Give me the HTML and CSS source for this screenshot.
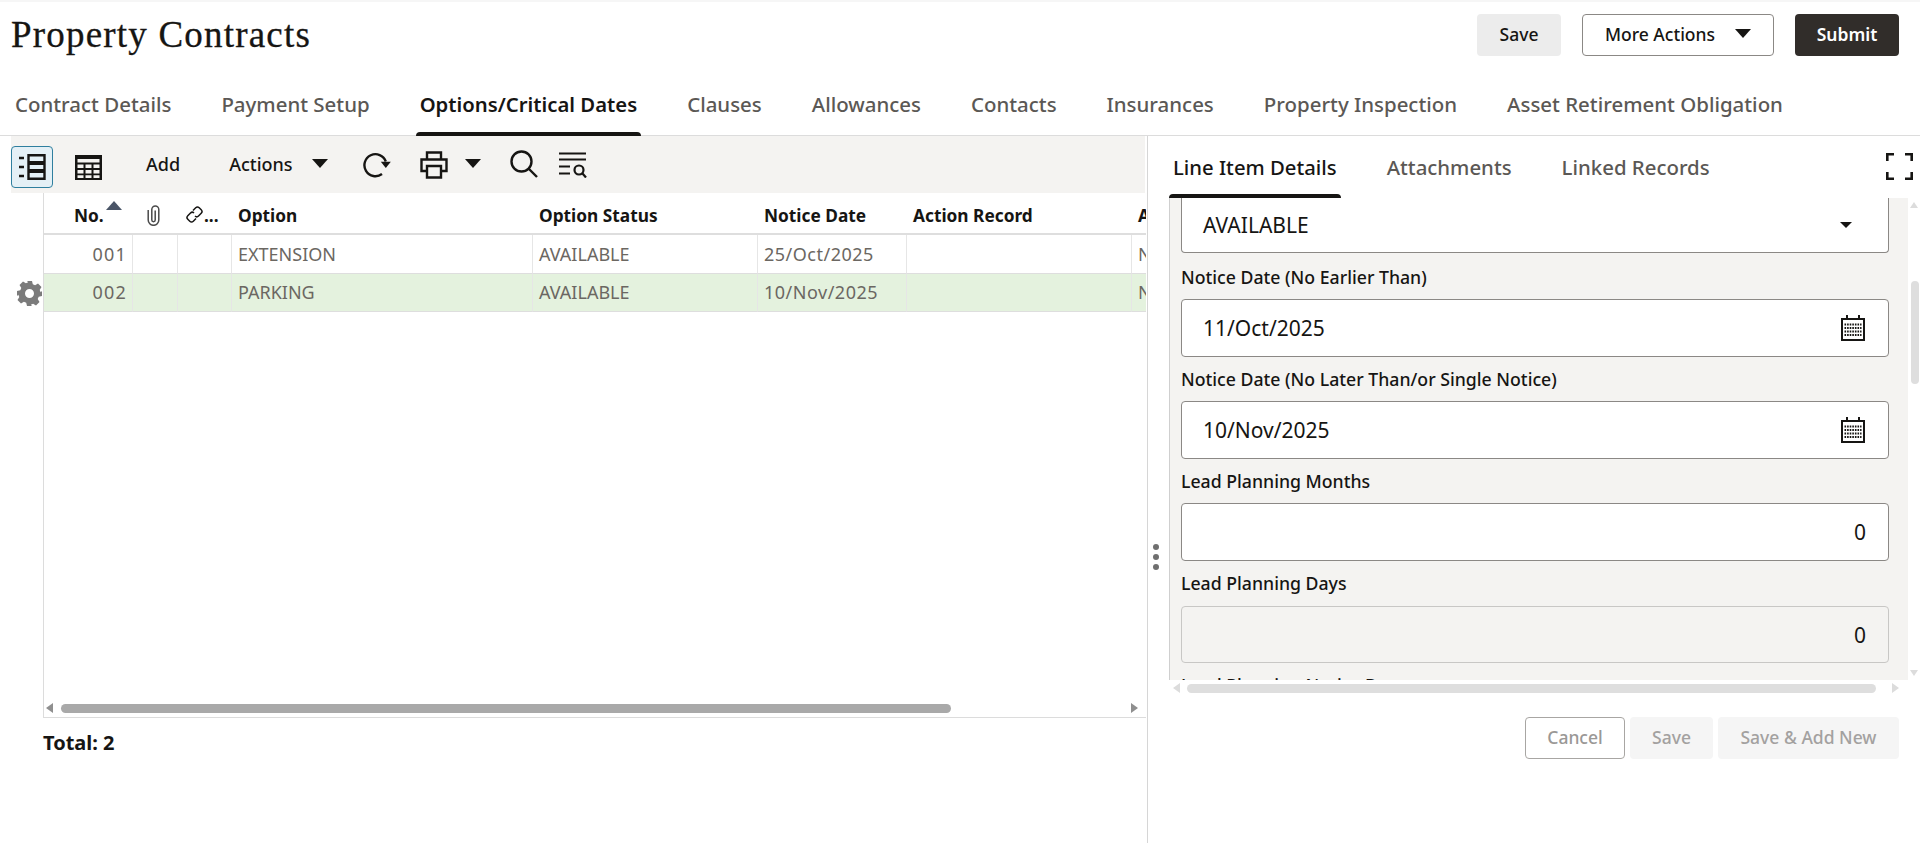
FILE: index.html
```html
<!DOCTYPE html>
<html lang="en">
<head>
<meta charset="utf-8">
<title>Property Contracts</title>
<link rel="stylesheet" href="styles.css">
</head>
<body>
<div class="app">
  <header class="page-head">
    <h1 class="page-title">Property Contracts</h1>
    <div class="head-actions">
      <button class="btn btn-soft btn-save">Save</button>
      <button class="btn btn-outline btn-more">More Actions <span class="caret caret-lg"></span></button>
      <button class="btn btn-dark btn-submit">Submit</button>
    </div>
  </header>
  <nav class="main-tabs">
    <a class="tab">Contract Details</a>
    <a class="tab">Payment Setup</a>
    <a class="tab tab-active">Options/Critical Dates</a>
    <a class="tab">Clauses</a>
    <a class="tab">Allowances</a>
    <a class="tab">Contacts</a>
    <a class="tab">Insurances</a>
    <a class="tab">Property Inspection</a>
    <a class="tab">Asset Retirement Obligation</a>
  </nav>
  <main class="split">
    <section class="left-pane">
      <div class="toolbar">
        <button class="tool tool-active" aria-label="List view">
          <svg width="28" height="28" viewBox="0 0 28 28" fill="none" stroke="#161513"><path d="M1 5h5M1 14h5M1 23h5" stroke-width="2.4"/><path d="M10.5 2.2h16v7h-16zM10.5 10.8h16v6.5h-16zM10.5 18.8h16v7h-16z" stroke-width="2.4"/></svg>
        </button>
        <button class="tool tool-table" aria-label="Table view">
          <svg width="27" height="25" viewBox="0 0 27 25"><path fill="#161513" d="M0 0h27v25H0z"/><path fill="#f4f3f1" d="M2.5 4h22v3.5h-22zM2.5 9.5h6v3.5h-6zM10.5 9.5h6v3.5h-6zM18.5 9.5h6v3.5h-6zM2.5 15h6v3.5h-6zM10.5 15h6v3.5h-6zM18.5 15h6v3.5h-6zM2.5 20.200h6v2.800h-6zM10.500 20.200h6v2.800h-6zM18.500 20.200h6v2.800h-6z"/></svg>
        </button>
        <span class="tool-text tool-add">Add</span>
        <span class="tool-text tool-actions">Actions</span>
        <span class="caret caret-lg caret-actions"></span>
        <svg class="ico-refresh" width="28" height="26" viewBox="0 0 28 26" fill="none" stroke="#161513" stroke-width="2.400"><path d="M19 22A11 11 0 1 1 22.800 9.500"/><path fill="#161513" stroke="none" d="M17.800 9.800h10L22.800 16z"/></svg>
        <svg class="ico-print" width="28" height="28" viewBox="0 0 28 28" fill="none" stroke="#161513" stroke-width="2.400"><path d="M7 8V1.500h14V8"/><path d="M7 20H1.500V8.500h25V20H21"/><path d="M7 15h14v11.500H7z"/></svg>
        <span class="caret caret-lg caret-print"></span>
        <svg class="ico-search" width="28" height="28" viewBox="0 0 28 28" fill="none" stroke="#161513" stroke-width="2.400"><circle cx="11.500" cy="11.500" r="10"/><path d="M18.500 18.500L27 27"/></svg>
        <svg class="ico-filter" width="28" height="26" viewBox="0 0 28 26" fill="none" stroke="#161513" stroke-width="2.200"><path d="M0 1.500h27M0 7.500h27M0 14.500h11M0 21.500h11"/><circle cx="20" cy="18" r="4.500"/><path d="M23.500 21.500L27 25.500"/></svg>
      </div>
      <div class="grid-area">
        <div class="gutter">
          <svg class="ico-gear" width="25" height="25" viewBox="0 0 25 25"><path fill="#7b7b7b" fill-rule="evenodd" d="M10 0h5l.8 3.300 2.300 1 2.900-1.800 3.500 3.500-1.800 2.900 1 2.300L25 10v5l-3.300.8-1 2.300 1.800 2.900-3.500 3.500-2.900-1.800-2.300 1L15 25h-5l-.8-3.300-2.300-1L4 22.500.5 19l1.800-2.900-1-2.300L0 15v-5l3.300-.8 1-2.300L2.500 4 6 .5l2.900 1.800 2.300-1zM12.500 8a4.500 4.500 0 1 0 0 9 4.500 4.500 0 0 0 0-9z"/></svg>
        </div>
        <div class="grid-box">
          <div class="table-clip">
            <table class="grid">
              <colgroup>
                <col class="c-no"><col class="c-att"><col class="c-link"><col class="c-opt"><col class="c-stat"><col class="c-date"><col class="c-act"><col class="c-last">
              </colgroup>
              <thead>
                <tr>
                  <th class="th-no">No.<span class="sort-up"></span></th>
                  <th class="th-icon">
                    <svg width="13" height="21" viewBox="0 0 13 21" fill="none" stroke="#4a4a4a" stroke-width="1.500"><path d="M1.200 5v10a5.300 5.300 0 0 0 10.600 0V4.500a3.500 3.500 0 0 0-7 0V15a1.700 1.700 0 0 0 3.400 0V5.500"/></svg>
                  </th>
                  <th class="th-link">
                    <svg width="17" height="17" viewBox="0 0 17 17" fill="none" stroke="#161513" stroke-width="1.500"><path d="M7 4.500L9.700 1.800a2.500 2.500 0 0 1 3.500 0l2 2a2.500 2.500 0 0 1 0 3.500l-2.700 2.700a2.500 2.500 0 0 1-3.500 0"/><path d="M10 12.500L7.300 15.200a2.500 2.500 0 0 1-3.500 0l-2-2a2.500 2.500 0 0 1 0-3.500L4.500 7a2.500 2.500 0 0 1 3.500 0"/></svg><span class="th-ell">...</span>
                  </th>
                  <th>Option</th>
                  <th>Option Status</th>
                  <th>Notice Date</th>
                  <th>Action Record</th>
                  <th>Action</th>
                </tr>
              </thead>
              <tbody>
                <tr>
                  <td class="num">001</td><td></td><td></td><td>EXTENSION</td><td>AVAILABLE</td><td class="date">25/Oct/2025</td><td></td><td>No</td>
                </tr>
                <tr class="row-sel">
                  <td class="num">002</td><td></td><td></td><td>PARKING</td><td>AVAILABLE</td><td class="date">10/Nov/2025</td><td></td><td>No</td>
                </tr>
              </tbody>
            </table>
          </div>
          <div class="hscroll hscroll-dark">
            <span class="arrow-left"></span>
            <span class="hthumb"></span>
            <span class="arrow-right"></span>
          </div>
        </div>
      </div>
      <div class="total">Total: 2</div>
    </section>
    <div class="splitter"><span class="dot"></span><span class="dot"></span><span class="dot"></span></div>
    <section class="right-pane">
      <div class="side-tabs">
        <a class="stab stab-active">Line Item Details</a>
        <a class="stab">Attachments</a>
        <a class="stab">Linked Records</a>
        <svg class="ico-expand" width="27" height="27" viewBox="0 0 27 27" fill="none" stroke="#161513" stroke-width="2.600"><path d="M1.300 8V1.300H8M19 1.300h6.700V8M25.700 19v6.700H19M8 25.700H1.300V19"/></svg>
      </div>
      <div class="form-wrap">
        <div class="form-row">
          <div class="form-panel">
            <div class="field field-top"><span>AVAILABLE</span><span class="caret caret-sm"></span></div>
            <label class="flabel flabel-first">Notice Date (No Earlier Than)</label>
            <div class="field"><span>11/Oct/2025</span>
              <svg width="24" height="26" viewBox="0 0 24 26"><path fill="none" stroke="#161513" stroke-width="2" d="M1 4h22v21H1z"/><path fill="none" stroke="#161513" stroke-width="2" d="M6 0v4M18 0v4"/><path fill="none" stroke="#161513" stroke-width="2" stroke-dasharray="1.600 1" d="M3.500 9.500h17M3.500 13h17M3.500 16.500h17M3.500 20h17"/></svg>
            </div>
            <label class="flabel">Notice Date (No Later Than/or Single Notice)</label>
            <div class="field"><span>10/Nov/2025</span>
              <svg width="24" height="26" viewBox="0 0 24 26"><path fill="none" stroke="#161513" stroke-width="2" d="M1 4h22v21H1z"/><path fill="none" stroke="#161513" stroke-width="2" d="M6 0v4M18 0v4"/><path fill="none" stroke="#161513" stroke-width="2" stroke-dasharray="1.600 1" d="M3.500 9.500h17M3.500 13h17M3.500 16.500h17M3.500 20h17"/></svg>
            </div>
            <label class="flabel">Lead Planning Months</label>
            <div class="field field-num"><span>0</span></div>
            <label class="flabel">Lead Planning Days</label>
            <div class="field field-num field-off"><span>0</span></div>
            <label class="flabel flabel-last">Lead Planning Notice Date</label>
          </div>
          <div class="vscroll">
            <span class="arrow-up"></span>
            <span class="vthumb"></span>
            <span class="arrow-down"></span>
          </div>
        </div>
        <div class="hscroll hscroll-light">
          <span class="arrow-left"></span>
          <span class="hthumb"></span>
          <span class="arrow-right"></span>
        </div>
      </div>
      <div class="form-actions">
        <button class="btn btn-cancel">Cancel</button>
        <button class="btn btn-off btn-s2">Save</button>
        <button class="btn btn-off btn-s3">Save &amp; Add New</button>
      </div>
    </section>
  </main>
</div>
</body>
</html>
```

FILE: styles.css
```css
* { box-sizing: border-box; }
html, body { margin: 0; height: 100%; background: #fff; overflow: hidden; }
body { font-family: "Noto Sans", "Open Sans", sans-serif; color: #161513; }
.app { width: 1920px; height: 843px; display: flex; flex-direction: column; border-top: 2px solid #f6f6f6; }

.page-head { height: 62px; flex: none; display: flex; justify-content: space-between; align-items: flex-start; padding: 12px 21px 0 11px; }
.page-title { margin: 0; font-family: "Liberation Serif", serif; font-weight: 400; font-size: 37px; line-height: 42px; letter-spacing: 1.200px; -webkit-text-stroke: .3px #161513; }
.head-actions { display: flex; gap: 21px; }

.btn { font: 500 17.500px/1 "Noto Sans", sans-serif; height: 42px; border-radius: 4px; border: 1px solid transparent; padding: 0; color: #161513; display: inline-flex; align-items: center; justify-content: center; }
.btn-soft { background: #ececec; }
.btn-save { width: 84px; }
.btn-outline { background: #fff; border-color: #8b8885; }
.btn-more { width: 192px; gap: 20px; }
.btn-dark { background: #312d2a; color: #fff; font-weight: 600; }
.btn-submit { width: 104px; }
.caret { display: inline-block; width: 0; height: 0; border-style: solid; border-color: #161513 transparent transparent; }
.caret-lg { border-width: 9px 8px 0; }
.btn-more .caret { margin-top: -4px; }

.main-tabs { height: 72px; flex: none; display: flex; gap: 50px; padding: 0 0 0 15px; border-bottom: 1px solid #dcdcdc; }
.tab { font-size: 20.450px; font-weight: 500; color: #5b5855; line-height: 24px; padding-top: 28px; position: relative; white-space: nowrap; }
.tab-active { color: #161513; font-weight: 600; font-size: 20.300px; }
.tab-active::after { content: ""; position: absolute; left: -4px; right: -4px; bottom: -1px; height: 4px; background: #161513; border-radius: 4px 4px 0 0; }

.split { flex: 1; display: flex; min-height: 0; }
.left-pane { width: 1148px; flex: none; border-right: 1px solid #d6d6d6; display: flex; flex-direction: column; }
.toolbar { margin-left: 11px; margin-right: 2px; height: 57px; flex: none; background: #f4f3f1; display: flex; align-items: center; }
.tool { border: 0; background: none; padding: 0; display: flex; align-items: center; justify-content: center; }
.tool-active { width: 42px; height: 42px; margin: 5px 22px 0 0; border: 1px solid #2f7f9f; border-radius: 4px; background: #e4f0f6; }
.tool-table { width: 27px; height: 25px; margin-top: 5px; }
.tool-text { font-size: 18px; font-weight: 500; margin-bottom: 2px; }
.tool-add { margin-left: 44px; }
.tool-actions { margin-left: 49px; }
.caret-actions { margin-left: 19px; margin-bottom: 2px; }
.ico-refresh { margin-left: 35px; }
.ico-print { margin-left: 29px; }
.caret-print { margin-left: 17px; margin-bottom: 2px; }
.ico-search { margin-left: 29px; margin-bottom: 2px; }
.ico-filter { margin-left: 21px; }

.grid-area { display: flex; height: 525px; flex: none; }
.gutter { width: 43px; flex: none; padding: 88px 0 0 17px; }
.ico-gear { display: block; }
.grid-box { width: 1103px; flex: none; border-left: 1px solid #dcdcdc; border-bottom: 1px solid #dcdcdc; display: flex; flex-direction: column; }
.table-clip { flex: 1; overflow: hidden; }
.grid { table-layout: fixed; width: 1190px; border-collapse: separate; border-spacing: 0; font-size: 18px; }
.c-no { width: 89px; } .c-att { width: 45px; } .c-link { width: 54px; } .c-opt { width: 301px; } .c-stat { width: 225px; } .c-date { width: 149px; } .c-act { width: 225px; } .c-last { width: 102px; }
.grid th { height: 42px; text-align: left; font-size: 17.300px; font-weight: 700; padding: 5px 6px 0; border-bottom: 2px solid #dedede; white-space: nowrap; overflow: hidden; color: #161513; }
.grid td { height: 38px; padding: 0 6px 1px; color: #6b6762; border-right: 1px solid #e6e6e6; border-bottom: 1px solid #dedede; white-space: nowrap; overflow: hidden; }
.grid tbody tr:first-child td { height: 39px; }
.th-no { padding-left: 30px !important; overflow: visible !important; position: relative; }
.sort-up { display: inline-block; width: 0; height: 0; border: solid transparent; border-width: 0 8px 9px; border-bottom-color: #4a5567; position: absolute; left: 62px; top: 8px; }
.th-icon { padding-left: 14px !important; }
.th-icon svg { display: block; }
.th-link { padding-left: 8px !important; }
.th-link svg { vertical-align: -1px; }
.th-ell { margin-left: 1px; }
.num { text-align: right; padding-right: 5px !important; letter-spacing: 1.200px; }
.date { letter-spacing: .5px; }
.row-sel td { background: #e4f2de; }

.hscroll { height: 22px; flex: none; display: flex; align-items: center; }
.hscroll-dark { padding: 4px 2px 0; }
.hthumb { display: block; height: 9px; border-radius: 5px; }
.hscroll-dark .hthumb { width: 890px; margin-left: 8px; background: #a9a9a9; }
.hscroll-dark .arrow-right { margin-left: 180px; }
.arrow-left, .arrow-right, .arrow-up, .arrow-down { display: block; width: 0; height: 0; border: solid transparent; }
.arrow-left { border-width: 5px 7px 5px 0; border-right-color: #8f8f8f; }
.arrow-right { border-width: 5px 0 5px 7px; border-left-color: #8f8f8f; }
.hscroll-light .arrow-left { border-right-color: #dcdcdc; }
.hscroll-light .arrow-right { border-left-color: #dcdcdc; }
.total { margin: 13px 0 0 43px; font-size: 20px; font-weight: 700; line-height: 24px; }

.splitter { width: 21px; flex: none; display: flex; flex-direction: column; align-items: center; gap: 4px; padding: 408px 5px 0 0; }
.dot { width: 6px; height: 6px; border-radius: 50%; background: #6f6f6f; }

.right-pane { flex: 1; min-width: 0; display: flex; flex-direction: column; }
.side-tabs { height: 63px; flex: none; display: flex; gap: 50px; padding-left: 4px; border-top: 1px solid #dcdcdc; position: relative; margin-top: -1px; }
.stab { font-size: 20.400px; font-weight: 500; color: #5b5855; line-height: 24px; padding-top: 19px; position: relative; white-space: nowrap; }
.stab-active { color: #161513; font-size: 20.300px; }
.stab-active::after { content: ""; position: absolute; left: -4px; right: -4px; bottom: 0; height: 4px; background: #161513; border-radius: 4px 4px 0 0; }
.ico-expand { position: absolute; right: 7px; top: 17px; }

.form-wrap { flex: none; }
.form-row { display: flex; height: 482px; }
.form-panel { width: 739px; flex: none; overflow: hidden; background: #f4f3f1; border-left: 1px solid #cfcfcf; padding: 0 19px 0 11px; }
.field { height: 58px; background: #fff; border: 1px solid #8b8885; border-radius: 4px; display: flex; justify-content: space-between; align-items: center; padding: 0 21px; font-size: 21px; }
.field-top { height: 55px; border-top: 0; border-radius: 0 0 4px 4px; }
.field svg { margin-right: 2px; }
.caret-sm { border-width: 6px 6px 0; margin-right: 15px; }
.field-num { justify-content: flex-end; padding-right: 22px; }
.field-off { background: #f4f3f1; border-color: #c8c7c5; height: 57px; margin-top: 1px; }
.flabel { display: block; height: 44px; padding-top: 10px; font-size: 17.700px; font-weight: 500; line-height: 24px; }
.flabel-first { margin-top: 2px; }
.flabel-last { margin-top: 1px; padding-top: 9px; }
.vscroll { width: 12px; flex: none; display: flex; flex-direction: column; align-items: center; padding: 4px 0; }
.arrow-up { border-width: 0 4px 6px; border-bottom-color: #dcdcdc; }
.arrow-down { border-width: 6px 4px 0; border-top-color: #dcdcdc; margin-top: auto; }
.vthumb { display: block; width: 8px; height: 103px; margin-top: 73px; background: #dedede; border-radius: 4px; margin-left: 2px; }
.hscroll-light { padding-left: 4px; height: 16px; }
.hscroll-light .hthumb { width: 689px; margin-left: 7px; background: #dedede; }
.hscroll-light .arrow-right { margin-left: 16px; }

.form-actions { display: flex; justify-content: flex-end; gap: 5px; padding: 21px 21px 0 0; }
.btn-cancel { width: 100px; background: #fff; border-color: #a8a6a3; color: #9a9896; }
.btn-off { background: #f5f5f5; color: #a3a1a0; }
.btn-s2 { width: 83px; }
.btn-s3 { width: 181px; }
```
